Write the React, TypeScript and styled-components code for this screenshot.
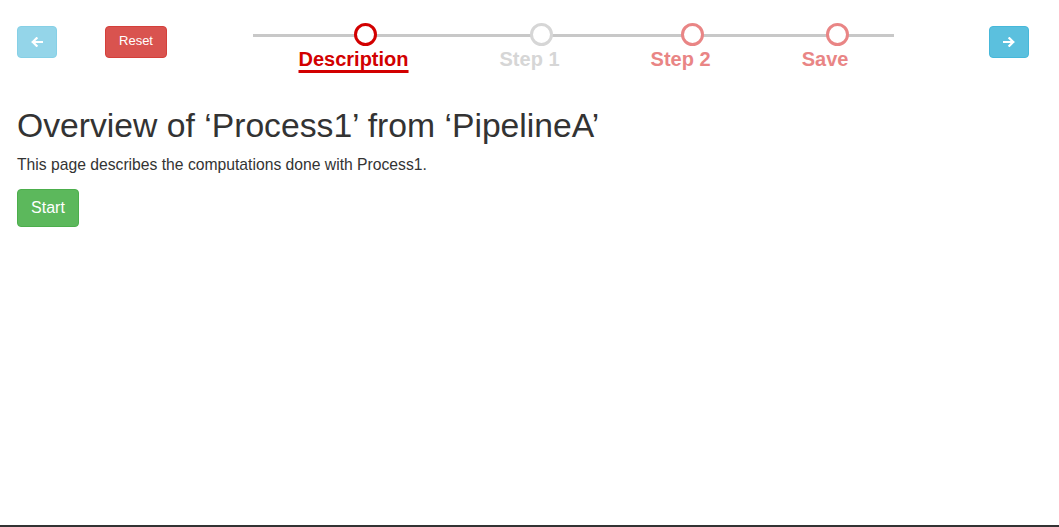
import React from "react";
import styled, { createGlobalStyle } from "styled-components";

const GlobalStyle = createGlobalStyle`
  html, body {
    margin: 0;
    padding: 0;
    background: #fff;
  }
  body {
    font-family: "Liberation Sans", Arial, Helvetica, sans-serif;
    color: #333;
  }
`;

type Tone = "active" | "todo" | "next";

const toneColor: Record<Tone, string> = {
  active: "#d20000",
  todo: "#d6d6d6",
  next: "#e98585",
};

const steps: { name: string; tone: Tone }[] = [
  { name: "Description", tone: "active" },
  { name: "Step 1", tone: "todo" },
  { name: "Step 2", tone: "next" },
  { name: "Save", tone: "next" },
];

// whole page, the dark rule sits at the very bottom
const Page = styled.div`
  box-sizing: border-box;
  height: 100vh;
  border-bottom: 2px solid #333;
  display: flex;
  flex-direction: column;
`;

const Header = styled.header`
  display: flex;
  align-items: flex-start;
  padding: 23px 0 0 17px;
`;

const ArrowButton = styled.button<{ $disabled?: boolean }>`
  box-sizing: border-box;
  width: 40px;
  height: 32px;
  margin-top: 3px;
  padding: 0;
  border: 1px solid #46b8da;
  border-radius: 4px;
  background: #5bc0de;
  opacity: ${(p) => (p.$disabled ? 0.65 : 1)};
  display: flex;
  align-items: center;
  justify-content: center;
  cursor: ${(p) => (p.$disabled ? "not-allowed" : "pointer")};
`;

const ResetButton = styled.button`
  box-sizing: border-box;
  width: 62px;
  height: 32px;
  margin: 3px 86px 0 48px;
  padding: 0 0 3px;
  border: 1px solid #d43f3a;
  border-radius: 4px;
  background: #d9534f;
  color: #fff;
  font-family: "Liberation Sans", Arial, sans-serif;
  font-size: 13px;
  cursor: pointer;
`;

const Stepper = styled.ol`
  position: relative;
  display: flex;
  margin: 0 95px 0 0;
  padding: 0;
  list-style: none;
  &::before {
    content: "";
    position: absolute;
    left: 0;
    right: 0;
    top: 11px;
    height: 3px;
    background: #c8c8c8;
  }
`;

const Step = styled.li`
  position: relative;
  display: flex;
  flex-direction: column;
  align-items: center;
  padding: 0 45.5px;
`;

const Dot = styled.span<{ $tone: Tone }>`
  position: relative;
  box-sizing: border-box;
  width: 23px;
  height: 23px;
  margin-left: 24px;
  border: 3px solid ${(p) => toneColor[p.$tone]};
  border-radius: 50%;
  background: #fff;
`;

const Label = styled.span<{ $tone: Tone }>`
  margin-top: 3px;
  font-size: 20px;
  line-height: 20px;
  font-weight: bold;
  white-space: nowrap;
  color: ${(p) => toneColor[p.$tone]};
  text-decoration: ${(p) => (p.$tone === "active" ? "underline" : "none")};
  text-decoration-thickness: 3px;
  text-underline-offset: 4px;
`;

const Main = styled.main`
  padding: 0 17px;
`;

const Title = styled.h1`
  margin: 38px 0 10px;
  font-size: 33.7px;
  font-weight: normal;
  line-height: 1.1;
  color: #333;
`;

const Lead = styled.p`
  margin: 0 0 12px;
  font-size: 15.7px;
  line-height: 1.43;
  color: #333;
`;

const StartButton = styled.button`
  box-sizing: border-box;
  width: 62px;
  height: 38px;
  padding: 0;
  border: 1px solid #4cae4c;
  border-radius: 4px;
  background: #5cb85c;
  color: #fff;
  font-family: "Liberation Sans", Arial, sans-serif;
  font-size: 16px;
  cursor: pointer;
`;

const Arrow = ({ dir }: { dir: "left" | "right" }) => (
  <svg
    width="12"
    height="10"
    viewBox="0 0 12 10"
    style={{ transform: dir === "right" ? "scaleX(-1)" : undefined }}
  >
    <path
      d="M11 5H1.8M5.6 1.2L1.8 5l3.8 3.8"
      fill="none"
      stroke="#fff"
      strokeWidth="2.2"
      strokeLinecap="square"
    />
  </svg>
);

export default function App() {
  return (
    <Page>
      <GlobalStyle />
      <Header>
        <ArrowButton $disabled aria-label="previous">
          <Arrow dir="left" />
        </ArrowButton>
        <ResetButton>Reset</ResetButton>
        <Stepper>
          {steps.map((s) => (
            <Step key={s.name}>
              <Dot $tone={s.tone} />
              <Label $tone={s.tone}>{s.name}</Label>
            </Step>
          ))}
        </Stepper>
        <ArrowButton aria-label="next">
          <Arrow dir="right" />
        </ArrowButton>
      </Header>
      <Main>
        <Title>Overview of ‘Process1’ from ‘PipelineA’</Title>
        <Lead>This page describes the computations done with Process1.</Lead>
        <StartButton>Start</StartButton>
      </Main>
    </Page>
  );
}
